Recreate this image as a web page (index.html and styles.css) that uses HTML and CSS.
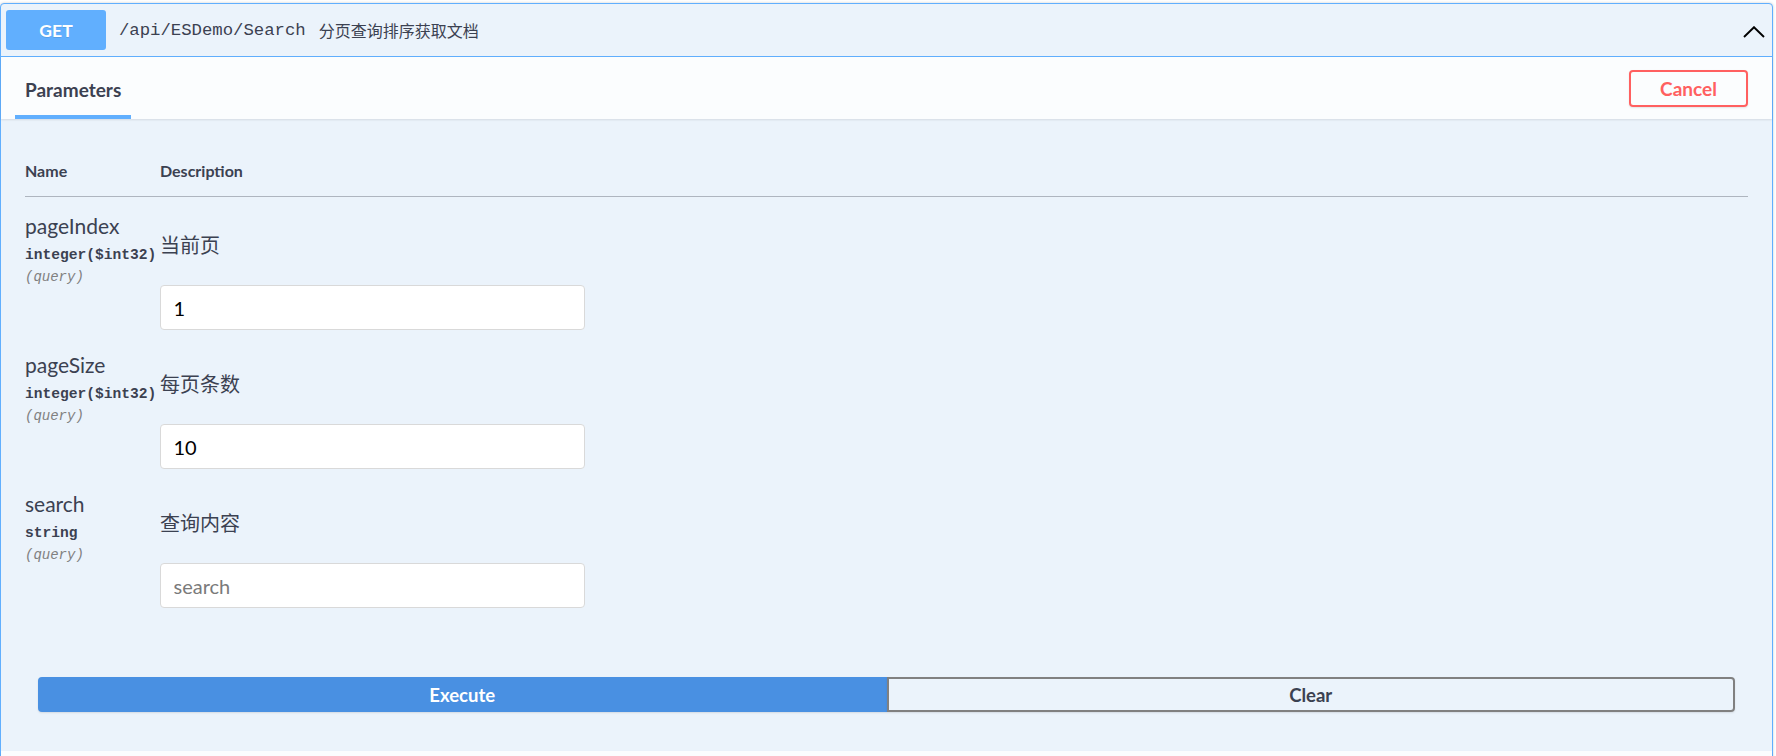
FILE: index.html
```html
<!DOCTYPE html>
<html lang="zh-CN">
<head>
<meta charset="utf-8">
<title>/api/ESDemo/Search</title>
<link rel="stylesheet" href="styles.css">
</head>
<body>
<div class="opblock">
  <div class="summary">
    <span class="method">GET</span>
    <span class="path">/api/ESDemo/Search</span>
    <span class="summary-desc">分页查询排序获取文档</span>
    <svg class="chevron" width="22" height="12" viewBox="0 0 22 12" aria-hidden="true">
      <polyline points="1,11 11,1.2 21,11" fill="none" stroke="#000" stroke-width="1.9"/>
    </svg>
  </div>
  <div class="section-header">
    <div class="tab">Parameters</div>
    <button class="cancel">Cancel</button>
  </div>
  <div class="params">
    <div class="thead">
      <div>Name</div>
      <div>Description</div>
    </div>
    <div class="row">
      <div class="pcol">
        <div class="pname">pageIndex</div>
        <div class="ptype">integer($int32)</div>
        <div class="pin">(query)</div>
      </div>
      <div class="pdesc">
        <p>当前页</p>
        <input class="field" type="text" value="1">
      </div>
    </div>
    <div class="row">
      <div class="pcol">
        <div class="pname">pageSize</div>
        <div class="ptype">integer($int32)</div>
        <div class="pin">(query)</div>
      </div>
      <div class="pdesc">
        <p>每页条数</p>
        <input class="field" type="text" value="10">
      </div>
    </div>
    <div class="row">
      <div class="pcol">
        <div class="pname">search</div>
        <div class="ptype">string</div>
        <div class="pin">(query)</div>
      </div>
      <div class="pdesc">
        <p>查询内容</p>
        <input class="field" type="text" placeholder="search">
      </div>
    </div>
  </div>
  <div class="btn-group">
    <button class="btn execute">Execute</button>
    <button class="btn clear">Clear</button>
  </div>
  <div class="responses"></div>
</div>
</body>
</html>
```
FILE: styles.css
```css
html, body {
  margin: 0;
  padding: 0;
  overflow: hidden;
  background: #fff;
}
body {
  font-family: Lato, "Noto Sans CJK SC", sans-serif;
  color: #3b4151;
}
.opblock {
  margin-top: 3px;
  width: 1773px;
  box-sizing: border-box;
  border: 1px solid #61affe;
  border-radius: 4px;
  background: #ebf3fb;
  box-shadow: 0 0 3px rgba(0, 0, 0, 0.19);
}
.summary {
  display: flex;
  align-items: center;
  padding: 6px 7px 6px 5px;
  border-bottom: 1px solid #61affe;
}
.method {
  width: 100px;
  height: 40px;
  border-radius: 3px;
  background: #61affe;
  color: #fff;
  font-weight: 700;
  font-size: 17.5px;
  display: flex;
  align-items: center;
  justify-content: center;
  text-shadow: 0 1px 0 rgba(0, 0, 0, 0.1);
}
.path {
  font-family: "Liberation Mono", monospace;
  font-size: 17.3px;
  padding: 0 13px;
  color: #3b4151;
}
.summary-desc {
  flex: 1;
  font-family: "Noto Sans CJK SC", sans-serif;
  font-size: 16px;
  color: #3b4151;
}
.chevron {
  margin-top: 3px;
}
.section-header {
  position: relative;
  z-index: 1;
  display: flex;
  justify-content: space-between;
  align-items: center;
  height: 62px;
  padding: 0 24px 0 14px;
  background: rgba(255, 255, 255, 0.8);
  box-shadow: 0 1px 2px rgba(0, 0, 0, 0.1);
}
.tab {
  align-self: stretch;
  box-sizing: border-box;
  padding: 21px 10px 0;
  border-bottom: 4px solid #61affe;
  font-size: 19px;
  font-weight: 700;
  line-height: 23px;
}
.cancel {
  width: 119px;
  height: 37px;
  box-sizing: border-box;
  border: 2px solid #ff6060;
  border-radius: 4px;
  background: transparent;
  color: #ff6060;
  font: 700 19px Lato, sans-serif;
  box-shadow: 0 1px 2px rgba(0, 0, 0, 0.1);
  padding: 0;
}
.params {
  padding: 0 24px 25px;
}
.thead {
  display: grid;
  grid-template-columns: 135px 1fr;
  padding: 42px 0 15px;
  border-bottom: 1px solid rgba(59, 65, 81, 0.35);
  font-size: 16px;
  font-weight: 700;
  line-height: 20px;
}
.row {
  display: grid;
  grid-template-columns: 135px 1fr;
  height: 139px;
  box-sizing: border-box;
  padding-top: 17px;
}
.pname {
  font-size: 21px;
  line-height: 24px;
}
.ptype {
  margin-top: 7px;
  font-family: "Liberation Mono", monospace;
  font-weight: 700;
  font-size: 14.6px;
  line-height: 20px;
  white-space: nowrap;
}
.pin {
  margin-top: 2px;
  font-family: "Liberation Mono", monospace;
  font-style: italic;
  font-weight: 400;
  font-size: 14px;
  line-height: 20px;
  color: #808080;
}
.pdesc p {
  margin: 17px 0 0;
  font-family: "Noto Sans CJK SC", sans-serif;
  font-size: 20px;
  line-height: 28px;
}
.field {
  display: block;
  margin-top: 26px;
  width: 425px;
  height: 45px;
  box-sizing: border-box;
  border: 1px solid #d9d9d9;
  border-radius: 4px;
  padding: 0 12.5px;
  font: 20px Lato, sans-serif;
  color: #000;
  background: #fff;
  outline: none;
}
.field::placeholder {
  color: #7a7a7a;
}
.btn-group {
  display: flex;
  padding: 38px 37px 39px;
}
.btn {
  flex: 1;
  height: 35px;
  box-sizing: border-box;
  font: 700 18.5px Lato, sans-serif;
  box-shadow: 0 1px 2px rgba(0, 0, 0, 0.1);
  padding: 0;
}
.execute {
  background: #4990e2;
  border: 2px solid #4990e2;
  color: #fff;
  border-radius: 4px 0 0 4px;
}
.clear {
  background: transparent;
  border: 2px solid #808080;
  color: #3b4151;
  border-radius: 0 4px 4px 0;
}
.responses {
  height: 60px;
  background: rgba(255, 255, 255, 0.8);
  box-shadow: 0 1px 2px rgba(0, 0, 0, 0.1);
}
```
